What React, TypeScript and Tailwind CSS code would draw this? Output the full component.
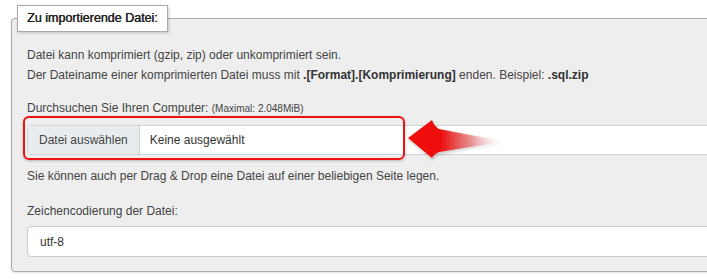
import React from "react";

function Arrow() {
  return (
    <svg
      className="absolute left-[398px] top-[112px]"
      width="120"
      height="56"
      viewBox="0 0 120 56"
    >
      <defs>
        <linearGradient id="ag" x1="0" y1="0" x2="1" y2="0" gradientUnits="objectBoundingBox">
          <stop offset="0" stopColor="#f00a0a" />
          <stop offset="0.35" stopColor="#ee1111" />
          <stop offset="0.65" stopColor="#e04a4a" stopOpacity="0.55" />
          <stop offset="1" stopColor="#ffffff" stopOpacity="0" />
        </linearGradient>
        <filter id="sh" x="-20%" y="-30%" width="140%" height="160%">
          <feDropShadow dx="1" dy="2" stdDeviation="1.5" floodColor="#000" floodOpacity="0.22" />
        </filter>
      </defs>
      <path
        d="M10 26 L34 8 Q36 14 41 17 L107 29.5 L41 40 Q36 42 34 46 Z"
        fill="url(#ag)"
        filter="url(#sh)"
      />
    </svg>
  );
}

export default function App() {
  return (
    <div className="relative w-[707px] h-[279px] overflow-hidden bg-white font-['Liberation_Sans',Arial,sans-serif] text-[12px] text-[#444]">
      <fieldset className="ml-[11px] mt-[5px] w-[780px] border border-[#aaa] rounded-[4px] bg-[#eee] pl-[5px] pb-[14px] shadow-[0_1px_2px_rgba(0,0,0,0.12)]">
        <legend className="bg-white border border-[#aaa] px-[9px] py-[5px] leading-[15px] text-[12.5px] text-[#222] [text-shadow:0.45px_0_0_#222] shadow-[1px_1px_3px_rgba(0,0,0,0.2)]">
          Zu importierende Datei:
        </legend>
        <div className="pl-[10px]">
          <div className="mt-[13px] leading-[20px]">
            <div>Datei kann komprimiert (gzip, zip) oder unkomprimiert sein.</div>
            <div>
              Der Dateiname einer komprimierten Datei muss mit{" "}
              <b className="text-[#333]">.[Format].[Komprimierung]</b> enden. Beispiel:{" "}
              <b className="text-[#333]">.sql.zip</b>
            </div>
          </div>
          <div className="mt-[13px] leading-[20px]">
            Durchsuchen Sie Ihren Computer: <span className="text-[10px]">(Maximal: 2.048MiB)</span>
          </div>
          <div className="mt-[6px] flex h-[30px] border border-[#ced4da] rounded-l-[4px] bg-white">
            <div className="flex items-center px-[11px] bg-[#e9ecef] border-r border-[#ced4da] rounded-l-[3px] text-[#444]">
              Datei auswählen
            </div>
            <div className="flex items-center pl-[10px] text-[#333]">Keine ausgewählt</div>
          </div>
          <div className="mt-[11px] leading-[20px]">
            Sie können auch per Drag &amp; Drop eine Datei auf einer beliebigen Seite legen.
          </div>
          <div className="mt-[15px] leading-[20px]">Zeichencodierung der Datei:</div>
          <div className="mt-[5px] flex items-center h-[31px] border border-[#ccc] rounded-l-[4px] bg-white pl-[12px] text-[#333]">
            utf-8
          </div>
        </div>
      </fieldset>
      <div className="absolute left-[23px] top-[116px] w-[382px] h-[44px] border-2 border-[#ee1111] rounded-[6px] shadow-[0_1px_3px_rgba(0,0,0,0.25)]" />
      <Arrow />
    </div>
  );
}
